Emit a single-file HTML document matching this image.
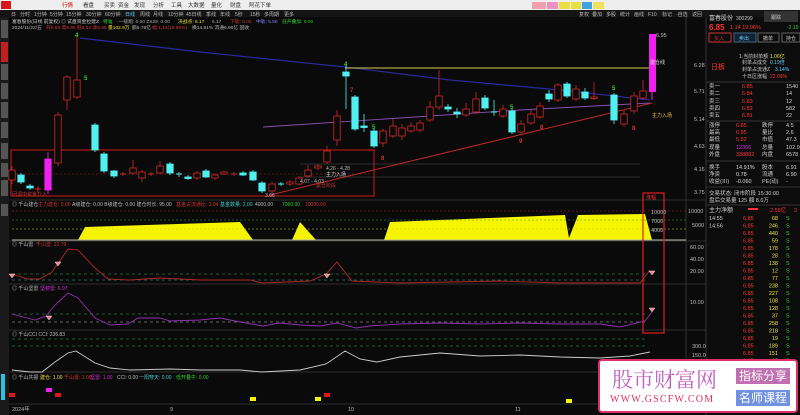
<!DOCTYPE html>
<html><head><meta charset="utf-8"><style>
*{margin:0;padding:0;box-sizing:border-box}
body{width:800px;height:415px;overflow:hidden;background:#0a0a0a;font-family:"Liberation Sans","Noto Sans CJK SC",sans-serif;position:relative}
svg{position:absolute;left:0;top:0}
text{font-family:"Liberation Sans","Noto Sans CJK SC",sans-serif}
.wm{position:absolute;left:598px;top:359px;width:200px;height:54px;background:#fff;border:2px solid #e0306a;border-radius:4px}
</style></head><body>
<svg id="s" width="800" height="415" viewBox="0 0 800 415">
<rect x="0" y="0" width="800" height="10" fill="#eeeeee"/>
<rect x="1" y="1" width="10" height="8" fill="#d8181c"/>
<g font-size="5.5" fill="#333">
<text x="62" y="7" fill="#c00">行情</text><text x="83" y="7">看盘</text><text x="104" y="7">买卖</text><text x="118" y="7">资金</text><text x="134" y="7">发现</text><text x="153" y="7">分析</text><text x="171" y="7">工具</text><text x="188" y="7">大数据</text><text x="211" y="7">量化</text><text x="230" y="7">财盘</text><text x="249" y="7">阿花下单</text>
</g>
<rect x="532" y="2" width="14" height="7" fill="#f0a0b0"/><rect x="547" y="2" width="11" height="7" fill="#f090c0"/><rect x="559" y="2" width="11" height="7" fill="#e8e040"/><rect x="571" y="2" width="10" height="7" fill="#e8e040"/><rect x="582" y="2" width="10" height="7" fill="#40a0e0"/><rect x="593" y="2" width="11" height="7" fill="#f0e060"/>
<rect x="0" y="10" width="800" height="7" fill="#141414"/>
<g font-size="5" fill="#bbb">
<text x="11" y="16">日</text><text x="20" y="16">分时</text><text x="34" y="16">1分钟</text><text x="50" y="16">5分钟</text><text x="66" y="16">15分钟</text><text x="86" y="16">30分钟</text><text x="105" y="16">60分钟</text><text x="125" y="16" fill="#6cf">日线</text><text x="140" y="16">周线</text><text x="153" y="16">月线</text><text x="168" y="16">10分钟</text><text x="186" y="16">45日线</text><text x="206" y="16">季线</text><text x="220" y="16">年线</text><text x="235" y="16">5秒</text><text x="250" y="16">15秒</text><text x="264" y="16">多周期</text><text x="284" y="16">更多</text>
<text x="579" y="16">复权</text><text x="592" y="16">叠加</text><text x="606" y="16">多股</text><text x="620" y="16">统计</text><text x="634" y="16">画线</text><text x="648" y="16">F10</text><text x="662" y="16">标记</text><text x="676" y="16">-自选</text><text x="692" y="16">返回</text>
</g>
<rect x="0" y="17" width="9" height="398" fill="#1a1a1a"/>
<rect x="1" y="42" width="7" height="20" fill="#c02020"/>
<g fill="#555"><rect x="1" y="20" width="7" height="18"/><rect x="1" y="64" width="7" height="16"/><rect x="1" y="83" width="7" height="16"/><rect x="1" y="102" width="7" height="16"/><rect x="1" y="122" width="7" height="16"/><rect x="1" y="143" width="7" height="16"/><rect x="1" y="163" width="7" height="14"/><rect x="1" y="180" width="7" height="16"/><rect x="1" y="204" width="7" height="12"/></g>
<rect x="1" y="374" width="4" height="26" fill="#30c0e0"/>
<g font-size="4.8">
<text x="12" y="23" fill="#ccc">富春股份(日线 前复权) ◎ 试盘资金拉建Z</text><text x="103" y="23" fill="#3c3">特准</text><text x="117" y="23" fill="#aaa">·一级跑: 0.00 ZS29: 0.00</text><text x="178" y="23" fill="#e8e040">决战点: 6.17</text><text x="212" y="23" fill="#aaa">6.17</text><text x="230" y="23" fill="#c33">下轨: 0.00</text><text x="256" y="23" fill="#88f">中轨: 5.50</text><text x="282" y="23" fill="#3c3">低开叠加: 0.00</text>
<text x="12" y="29" fill="#bbb">2024/11/22/五</text><text x="46" y="29" fill="#c33">开5.69 高6.85 低5.52 收6.85</text><text x="108" y="29" fill="#e8e040">量102.9万</text><text x="132" y="29" fill="#bbb">额6.78亿</text><text x="152" y="29" fill="#c33">幅 1.14(19.96%)</text><text x="192" y="29" fill="#bbb">换14.91% 流通6.90亿 固收</text>
</g>
<g id="main"></g>
<g font-size="5.5" fill="#bbb">
<text x="656" y="37">6.95</text><text x="694" y="67">6.28</text><text x="694" y="93">5.71</text><text x="694" y="121">5.14</text><text x="694" y="148">4.63</text><text x="694" y="171">4.16</text><text x="694" y="194">3.75</text>
<text x="688" y="213">10000</text><text x="692" y="227">5000</text>
<text x="690" y="249">60.00</text><text x="690" y="261">40.00</text><text x="690" y="273">20.00</text><text x="690" y="304">10.00</text><text x="692" y="348">300.0</text><text x="692" y="357">150.0</text>
<text x="651" y="214">10000</text><text x="651" y="223">7000</text><text x="651" y="232">4000</text>
<text x="12" y="411">2024年</text><text x="170" y="411">9</text><text x="348" y="411">10</text><text x="515" y="411">11</text>
</g>
<g font-size="5">
<text x="12" y="206" fill="#bbb">◎ 千山建仓</text><text x="38" y="206" fill="#c33">主力建仓: 0.00</text><text x="72" y="206" fill="#bbb">A级建仓: 0.00  B级建仓: 0.00  建仓时长: 95.00</text><text x="176" y="206" fill="#c33">基金占流通比: 3.04</text><text x="220" y="206" fill="#4cc">基金数量: 2.00</text><text x="255" y="206" fill="#bbb">4000.00</text><text x="282" y="206" fill="#3c3">7060.00</text><text x="305" y="206" fill="#c33">10000.00</text>
<text x="12" y="246" fill="#bbb">◎ 千山雷</text><text x="36" y="246" fill="#c33">千山雷: 22.79</text>
<text x="12" y="290" fill="#bbb">◎ 千山坚雷</text><text x="40" y="290" fill="#c3c">坚韧雷: 6.97</text>
<text x="12" y="336" fill="#bbb">◎ 千山CCI  CCI: 236.83</text>
<text x="12" y="379" fill="#bbb">◎ 千山共振</text><text x="40" y="379" fill="#e8e040">建仓: 1.00</text><text x="64" y="379" fill="#c33">千山雷: 1.00</text><text x="90" y="379" fill="#c3c">坚雷: 1.00</text><text x="117" y="379" fill="#bbb">CCI: 0.00</text><text x="139" y="379" fill="#4cc">一阳穿天: 0.00</text><text x="176" y="379" fill="#3c3">低开叠牛: 0.00</text>
</g>
<rect x="706" y="17" width="94" height="398" fill="#0c0c0c"/>
<line x1="706" y1="17" x2="706" y2="415" stroke="#333"/>
<g font-size="6">
<text x="709" y="20" fill="#ccc">富春股份</text><text x="736" y="20" fill="#ccc" font-size="5">300299</text><rect x="764" y="11" width="34" height="11" fill="#333"/><text x="771" y="19" fill="#ccc" font-size="5">跟踪</text>
<text x="709" y="30" fill="#f33" font-weight="bold" font-size="8">6.85</text><text x="730" y="29" fill="#f33" font-size="5.5">1.14 19.96%</text><text x="787" y="29" fill="#3c3" font-size="5">-2.19</text>
<rect x="709" y="33" width="22" height="9" fill="none" stroke="#c33"/><text x="714" y="40" fill="#c33" font-size="5">买入</text>
<rect x="734" y="33" width="22" height="9" fill="#123" stroke="#468"/><text x="739" y="40" fill="#6cf" font-size="5">卖出</text>
<rect x="758" y="33" width="21" height="9" fill="none" stroke="#666"/><text x="763" y="40" fill="#ccc" font-size="5">撤单</text>
<rect x="782" y="33" width="18" height="9" fill="none" stroke="#666"/><text x="786" y="40" fill="#ccc" font-size="5">持仓</text>
<text x="711" y="69" fill="#f33" font-size="7">日板</text>
<g font-size="5"><text x="739" y="58" fill="#ccc">1.当前封单额</text><text x="770" y="58" fill="#e8e040">1.06亿</text><text x="742" y="64" fill="#ccc">封单占成交</text><text x="770" y="64" fill="#6cf">0.19倍</text><text x="742" y="71" fill="#ccc">封单占流通Z</text><text x="775" y="71" fill="#6cf">3.14%</text><text x="742" y="78" fill="#ccc">十日区涨幅</text><text x="770" y="78" fill="#f33">22.09%</text></g>
<line x1="706" y1="82" x2="800" y2="82" stroke="#333"/>
</g>
<g id="rp" font-size="5.5"></g>
</svg>
<div class="wm">
<div style="position:absolute;left:12px;top:5px;font-size:21px;color:#c060c0;font-family:'Noto Serif CJK SC',serif;letter-spacing:0px;line-height:26px">股市财富网</div>
<div style="position:absolute;left:10px;top:33px;font-size:10px;color:#e03060;font-family:'Liberation Serif',serif;letter-spacing:1.2px">WWW.GSCFW.COM</div>
<div style="position:absolute;left:136px;top:7px;width:54px;height:16px;background:#c070b0;color:#fff;font-size:12px;line-height:16px;text-align:center">指标分享</div>
<div style="position:absolute;left:136px;top:29px;width:54px;height:16px;background:#7090e0;color:#fff;font-size:12px;line-height:16px;text-align:center">名师课程</div>
</div>
<script>
const NS="http://www.w3.org/2000/svg";
function el(p,t,a,txt){const e=document.createElementNS(NS,t);for(const k in a)e.setAttribute(k,a[k]);if(txt)e.textContent=txt;p.appendChild(e);return e;}
const m=document.getElementById('main');
[[200],[241],[284],[330],[372],[404]].forEach(([y])=>el(m,'line',{x1:9,y1:y,x2:706,y2:y,stroke:'#3a3a3a','stroke-width':0.8}));
el(m,'line',{x1:686,y1:17,x2:686,y2:404,stroke:'#333'});
el(m,'rect',{x:11,y:150,width:363,height:46,fill:'none',stroke:'#d01818','stroke-width':1});
el(m,'line',{x1:12,y1:174,x2:370,y2:174,stroke:'#a02020','stroke-dasharray':'2,2','stroke-width':0.6});
el(m,'line',{x1:300,y1:164,x2:640,y2:164,stroke:'#555','stroke-width':0.6});
el(m,'line',{x1:300,y1:177,x2:640,y2:177,stroke:'#555','stroke-width':0.6});
el(m,'polyline',{points:'80,38 200,52 345,67 450,80 560,90 650,100',fill:'none',stroke:'#2a2a9a','stroke-width':1.2});
el(m,'polyline',{points:'263,127 400,118 520,110 650,103',fill:'none',stroke:'#8a50b0','stroke-width':0.9});
el(m,'line',{x1:270,y1:195,x2:652,y2:103,stroke:'#c02828','stroke-width':1});
el(m,'line',{x1:345,y1:68,x2:652,y2:68,stroke:'#b0a840','stroke-width':1.2});
const C=[[12,170,180,'h',166,184],[21,175,182,'c',173,184],[30,186,188,'c',184,190],[38,189,189,'d',186,193],[48,159,190,'m',152,194],[58,115,163,'h',112,166],[67,77,100,'h',75,110],[77,80,97,'h',35,99],[95,125,150,'c',123,152],[104,154,171,'c',152,173],[114,171,176,'c',170,178],[123,174,174,'d',172,176],[133,168,173,'h',160,175],[142,172,178,'h',170,182],[151,174,174,'d',172,176],[160,166,173,'h',161,174],[170,164,173,'c',162,175],[179,174,174,'e',172,177],[188,177,178,'c',175,180],[197,173,178,'h',171,180],[206,171,177,'c',169,178],[215,175,178,'h',173,180],[224,172,174,'h',171,175],[234,174,174,'d',172,176],[243,173,175,'c',171,176],[253,172,180,'c',170,181],[262,183,191,'c',181,193],[272,184,191,'h',182,193],[281,184,184,'e',182,186],[290,182,184,'h',180,186],[299,178,184,'h',176,185],[308,170,176,'h',165,178],[318,166,168,'h',164,170],[327,151,162,'h',146,164],[337,116,140,'h',110,146],[346,72,76,'c',64,109],[355,97,129,'c',95,131],[364,126,126,'c',114,132],[374,131,146,'c',129,148],[383,131,143,'h',129,147],[393,126,136,'h',118,138],[402,128,136,'h',124,140],[411,126,131,'h',122,133],[420,123,130,'h',120,132],[430,107,120,'h',101,122],[439,96,107,'h',70,110],[448,107,109,'c',104,112],[457,112,114,'c',108,118],[466,109,115,'h',103,117],[476,99,112,'h',92,114],[485,98,108,'c',95,110],[494,112,112,'e',100,116],[503,109,116,'h',105,118],[512,111,132,'c',109,134],[521,124,132,'h',120,134],[531,114,123,'h',110,125],[540,106,117,'h',102,119],[549,94,99,'c',90,102],[558,85,100,'h',83,102],[567,84,96,'c',82,98],[576,89,99,'h',85,101],[585,92,98,'c',88,100],[594,97,98,'h',82,100],[614,95,120,'c',93,124],[624,114,124,'h',110,127],[634,96,111,'h',92,114],[643,91,98,'h',80,100]];
C.forEach(([x,t,b,k,hi,lo])=>{
 const col={h:'#d02828',d:'#d02828',c:'#50f0f0',e:'#50f0f0',m:'#f020f0'}[k];
 el(m,'line',{x1:x,y1:hi,x2:x,y2:lo,stroke:col,'stroke-width':0.8});
 if(k=='d'||k=='e'){el(m,'line',{x1:x-3,y1:t,x2:x+3,y2:t,stroke:col,'stroke-width':1});return;}
 el(m,'rect',{x:x-3.2,y:t,width:6.4,height:Math.max(b-t,1.5),fill:k=='h'?'#0a0a0a':col,stroke:col,'stroke-width':0.8});
});
el(m,'rect',{x:649,y:34,width:7,height:58,fill:'#f020f0'});
el(m,'line',{x1:652,y1:92,x2:652,y2:100,stroke:'#f020f0'});
[[77,37,'4','#3c3'],[86,80,'5','#3c3'],[346,66,'4','#3c3'],[374,129,'5','#3c3'],[512,109,'5','#3c3'],[614,90,'5','#3c3'],[383,160,'8','#c33'],[542,129,'8','#c33'],[634,130,'8','#c33'],[521,143,'9','#c33'],[352,92,'7','#c33']].forEach(a=>el(m,'text',{x:a[0]-2,y:a[1],'font-size':6,fill:a[3],'font-weight':'bold'},a[2]));
[[326,170,'4.26 - 4.28','#bbb'],[326,176,'主力入场','#ddd'],[300,183,'4.07 - 4.03','#bbb'],[316,187,'震仓阶段','#c33'],[265,197,'3.66','#bbb'],[650,64,'建仓线','#ddd'],[652,117,'主力入场','#e8c040'],[12,196,'回调中资金介入','#c33']].forEach(a=>el(m,'text',{x:a[0],y:a[1],'font-size':5,fill:a[3]},a[2]));
el(m,'polygon',{points:'78,240 85,227 240,222 253,240 292,240 300,222 316,240 384,240 390,222 565,215 569,238 578,215 645,214 652,240',fill:'#f5f500'});
el(m,'line',{x1:12,y1:240,x2:686,y2:240,stroke:'#bba',"stroke-width":1});
el(m,'line',{x1:12,y1:220,x2:686,y2:220,stroke:'#3a3','stroke-dasharray':'2,2','stroke-width':0.6});
el(m,'line',{x1:12,y1:229,x2:686,y2:229,stroke:'#cc3','stroke-dasharray':'2,2','stroke-width':0.6});
el(m,'line',{x1:12,y1:211,x2:686,y2:211,stroke:'#922','stroke-dasharray':'2,2','stroke-width':0.6});
[[274,'#3a5'],[280,'#4aa'],[314,'#3a5'],[322,'#bbb'],[339,'#3a5'],[346,'#3a5']].forEach(([y,c])=>el(m,'line',{x1:12,y1:y,x2:646,y2:y,stroke:c,'stroke-dasharray':'3,3','stroke-width':0.6}));
el(m,'polyline',{points:'12,274 28,279 40,279 52,272 68,249 78,250 95,268 108,279 130,280 160,278 200,280 250,280 262,283 310,281 326,274 337,262 352,281 400,283 500,281 560,283 640,283 650,270',fill:'none',stroke:'#b02828','stroke-width':0.9});
el(m,'polyline',{points:'12,314 35,320 46,316 55,305 68,293 78,298 95,318 110,325 128,324 138,318 160,318 170,321 200,320 220,318 240,322 263,326 280,323 300,325 320,326 337,323 356,328 370,326 400,324 440,323 480,324 520,323 560,324 600,324 620,327 645,321 652,312',fill:'none',stroke:'#9030b0','stroke-width':0.9});
el(m,'polyline',{points:'12,370 30,372 42,372 55,362 68,353 76,351 95,363 110,368 130,370 170,369 200,370 240,370 262,372 300,370 326,364 345,351 360,359 377,362 400,357 440,353 480,356 520,355 560,357 600,358 630,356 650,352',fill:'none',stroke:'#ccc','stroke-width':0.9});
[[9,393,'#e01818'],[46,388,'#f020f0'],[55,393,'#e01818'],[250,397,'#f5f500'],[315,397,'#f5f500'],[324,393,'#e01818'],[566,399,'#f5f500']].forEach(([x,y,c])=>el(m,'rect',{x:x,y:y,width:6,height:4,fill:c}));
[[12,276],[58,264],[49,318],[327,276],[652,273],[652,310]].forEach(([x,y])=>el(m,'path',{d:`M${x-3},${y-2}h6l-3,4z`,fill:'#f08090',stroke:'#fff','stroke-width':0.4}));
el(m,'rect',{x:643,y:193,width:21,height:140,fill:'none',stroke:'#e02020','stroke-width':1.2});
el(m,'text',{x:646,y:199,'font-size':5,fill:'#f33'},'涨幅');
const rp=document.getElementById('rp');
const L=[['卖一','6.85','1540',88],['卖二','6.84','14',95],['卖三','6.83','12',103],['卖四','6.82','582',110],['卖五','6.81','22',117]];
L.forEach(([a,b,c,y])=>{el(rp,'text',{x:709,y:y,fill:'#ccc'},a);el(rp,'text',{x:742,y:y,fill:'#f33'},b);el(rp,'text',{x:786,y:y,fill:'#ccc'},c);});
el(rp,'line',{x1:706,y1:121,x2:800,y2:121,stroke:'#333'});
[['涨停','6.85','跌停','4.5',127],['最高','6.85','量比','2.6',134],['最低','5.52','市值','47.3',141],['现量','12366','总量','102.9',149],['外盘','338882','内盘','6578',156]].forEach(([a,b,c,d,y])=>{el(rp,'text',{x:709,y:y,fill:'#ccc'},a);el(rp,'text',{x:736,y:y,fill:y==149?'#c3c':'#f33'},b);el(rp,'text',{x:762,y:y,fill:'#ccc'},c);el(rp,'text',{x:786,y:y,fill:'#ccc'},d);});
el(rp,'line',{x1:706,y1:161,x2:800,y2:161,stroke:'#333'});
[['换手','14.91%','股本','6.91',169],['净资','0.78','流通','6.90',176],['收益(Ⅲ)','-0.060','PE(动)','-',183]].forEach(([a,b,c,d,y])=>{el(rp,'text',{x:709,y:y,fill:'#ccc'},a);el(rp,'text',{x:736,y:y,fill:'#ddd'},b);el(rp,'text',{x:762,y:y,fill:'#ccc'},c);el(rp,'text',{x:786,y:y,fill:'#ddd'},d);});
el(rp,'line',{x1:706,y1:187,x2:800,y2:187,stroke:'#333'});
el(rp,'text',{x:709,y:195,fill:'#ccc'},'交易状态: 闭市阶段 15:30:00');
el(rp,'text',{x:709,y:202,fill:'#ccc'},'盘后交易量 125 額 8.6万');
el(rp,'line',{x1:706,y1:205,x2:800,y2:205,stroke:'#333'});
el(rp,'text',{x:709,y:212,fill:'#ccc','font-size':6},'主力净额');
el(rp,'rect',{x:748,y:208,width:10,height:2,fill:'#f33'});
el(rp,'text',{x:770,y:212,fill:'#f33'},'2.59亿');el(rp,'text',{x:794,y:212,fill:'#f33'},'3');
const V=[68,246,440,59,178,28,138,12,77,238,227,108,128,37,258,218,19,189,151,12,60,33,85,44,21,70];
V.forEach((v,i)=>{const y=220+i*7.5;if(y>414)return;if(i<2)el(rp,'text',{x:709,y:y,fill:'#ccc'},i?'14:56':'14:55');el(rp,'text',{x:743,y:y,fill:'#f33'},'6.85');el(rp,'text',{x:778,y:y,fill:'#e8e040','text-anchor':'end'},String(v));el(rp,'text',{x:786,y:y,fill:'#3c3'},'S');});
</script>
</body></html>
